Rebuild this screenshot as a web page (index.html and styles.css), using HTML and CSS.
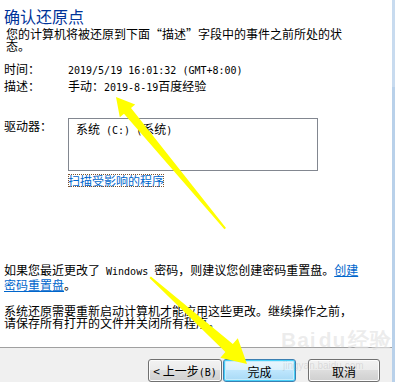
FILE: index.html
```html
<!DOCTYPE html>
<html>
<head>
	<meta charset="utf-8" />
	<link rel="stylesheet" href="styles.css">
</head>
<body>
	<div class="dialog">
		<div class="page">
			<div class="content">
				<h1 class="title">确认还原点</h1>
				<p class="intro">您的计算机将被还原到下面“描述”字段中的事件之前所处的状<br>态。</p>
				<div class="info">
					<div class="row"><span class="label">时间：</span><span class="value"><span class="en">2019/5/19 16:01:32 (GMT+8:00)</span></span></div>
					<div class="row"><span class="label">描述：</span><span class="value">手动：<span class="en">2019-8-19</span>百度经验</span></div>
				</div>
				<div class="drives">
					<span class="label drive-label">驱动器：</span>
					<div class="drive-col">
						<div class="drive-list">系统<span class="en"> (C:) (</span>系统<span class="en">)</span></div>
						<a class="scan" href="#">扫描受影响的程序</a>
					</div>
				</div>
				<p class="note">如果您最近更改了<span class="en"> Windows </span>密码，则建议您创建密码重置盘。<a href="#">创建<br>密码重置盘</a>。</p>
				<p class="note2">系统还原需要重新启动计算机才能应用这些更改。继续操作之前，<br>请保存所有打开的文件并关闭所有程序。</p>
			</div>
			<div class="footer">
				<button class="btn btn-prev">&lt; 上一步<span class="en">(B)</span></button>
				<button class="btn btn-default">完成</button>
				<button class="btn btn-cancel">取消</button>
			</div>
		</div>
		<div class="edge"></div>

		<!-- watermark + annotation arrows over the screenshot -->
		<div class="mark">Bai<span class="paw">du</span>经验</div>
		<div class="mark-url">jingyan.baidu.com</div>
		<svg class="arrows" width="395" height="382" viewBox="0 0 395 382">
			<polygon points="116,97 135.2,104.4 131,107.9 226,228 224.4,229.2 124,113.7 119.8,117.2" fill="#ffff00"/>
			<polygon points="247,364 237.8,338.3 232.8,343.9 150.9,276.6 149.5,278 225.4,352.1 220.4,357.7" fill="#ffff00"/>
		</svg>
	</div>
</body>
</html>
```

FILE: styles.css
```css
*
{
	box-sizing:border-box;
}
body
{
	margin:0;
	background:#ffffff;
	font-family:"Noto Sans CJK SC", sans-serif;
	font-size:12px;
	color:#000000;
	overflow:hidden;
}
.dialog
{
	position:relative;
	display:flex;
	width:395px;
	height:382px;
	overflow:hidden;
}
.page
{
	width:392px;
	display:flex;
	flex-direction:column;
}
.content
{
	height:350px;
	padding:6px 0 0 4px;
}
.title
{
	margin:0;
	font-size:16px;
	font-weight:normal;
	line-height:20px;
	color:#003399;
}
.intro
{
	margin:2px 0 0 2px;
	line-height:12px;
	white-space:nowrap;
}
.en
{
	font-family:"DejaVu Sans Mono", monospace;
	font-size:10px;
}
.info
{
	margin-top:8px;
}
.row
{
	display:flex;
	height:17px;
	line-height:17px;
}
.label
{
	width:64px;
	flex:none;
}
.drives
{
	display:flex;
	margin-top:24px;
}
.drive-label
{
	padding-top:2px;
	line-height:12px;
}
.drive-col
{
	display:flex;
	flex-direction:column;
	align-items:flex-start;
}
.drive-list
{
	width:250px;
	height:53px;
	border:1px solid #828790;
	padding:4px 0 0 7px;
	line-height:12px;
}
.scan
{
	display:inline-block;
	margin-top:3px;
	line-height:13px;
	color:#0066cc;
	text-decoration:none;
	outline:1px dotted #7a5230;
	outline-offset:-1px;
}
a
{
	color:#0066cc;
}
.note
{
	margin:76px 0 0 0;
	line-height:13px;
	white-space:nowrap;
}
.note2
{
	margin:14px 0 0 0;
	line-height:12px;
	white-space:nowrap;
}
.footer
{
	flex:1;
	display:flex;
	justify-content:flex-end;
	align-items:flex-start;
	background:#f0f0f0;
	border-top:1px solid #a0a0a0;
	padding:11px 12px 0 0;
}
.btn
{
	height:23px;
	padding:1px 0 0 0;
	font-family:"Noto Sans CJK SC", sans-serif;
	font-size:12px;
	line-height:19px;
	color:#000000;
	border:1px solid #707070;
	border-radius:3px;
	background:linear-gradient(#f2f2f2 0%, #ebebeb 50%, #dddddd 50%, #cfcfcf 100%);
	box-shadow:inset 0 0 0 1px #fcfcfc;
}
.btn-prev
{
	width:74px;
	margin-right:1px;
}
.btn-default
{
	width:73px;
	margin-right:12px;
	border-color:#3c7fb1;
	background:linear-gradient(#eaf6fd 0%, #d9f0fc 50%, #bee6fd 50%, #a7d9f5 100%);
	box-shadow:inset 0 0 0 1px #48d0f8, inset 0 0 0 2px #c9ecfb;
}
.btn-cancel
{
	width:72px;
}
.edge
{
	width:3px;
	background:linear-gradient(#c8dbef 0px, #c8dbef 87px, #b9d1ea 87px);
}
.mark
{
	position:absolute;
	left:281px;
	top:326px;
	font-family:"Liberation Sans", sans-serif;
	font-size:21px;
	font-weight:bold;
	color:rgba(180,180,180,0.25);
	text-shadow:0 0 1px rgba(255,255,255,0.6);
	letter-spacing:1px;
	pointer-events:none;
}
.mark .paw
{
	margin:0 2px;
}
.mark-url
{
	position:absolute;
	left:283px;
	top:360px;
	font-family:"Liberation Sans", sans-serif;
	font-size:10px;
	color:rgba(150,150,150,0.25);
	pointer-events:none;
}
.arrows
{
	position:absolute;
	left:0;
	top:0;
	pointer-events:none;
}
```
